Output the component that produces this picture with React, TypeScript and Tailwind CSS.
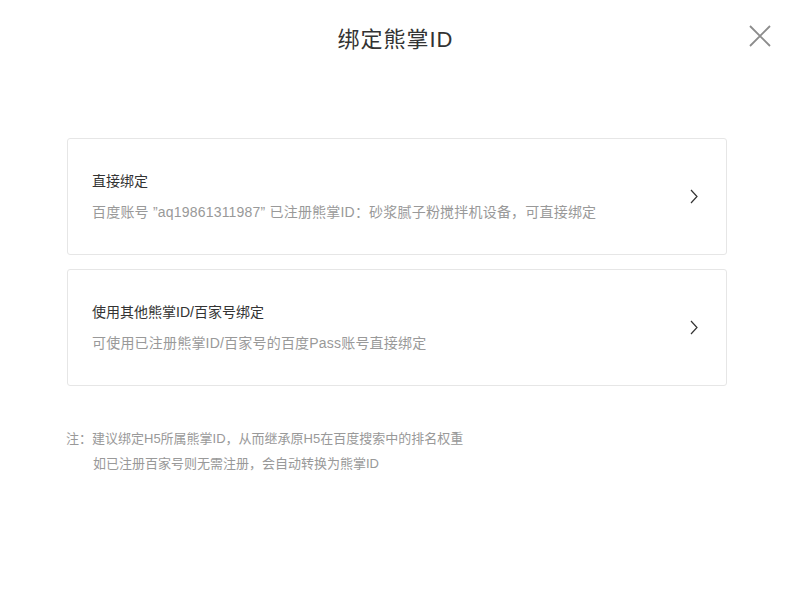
const options = [
  {
    title: '直接绑定',
    desc: '百度账号 ”aq19861311987” 已注册熊掌ID：砂浆腻子粉搅拌机设备，可直接绑定',
  },
  {
    title: '使用其他熊掌ID/百家号绑定',
    desc: '可使用已注册熊掌ID/百家号的百度Pass账号直接绑定',
  },
];

export default function App() {
  return (
    <div
      className="relative min-h-[596px] w-[791px] bg-white"
      style={{ fontFamily: '"Liberation Sans", "Noto Sans CJK SC", sans-serif' }}
    >
      <button className="absolute right-[19px] top-[24px] text-[#8c8c8c]" aria-label="close">
        <svg width="24" height="24" viewBox="0 0 24 24" fill="none" stroke="currentColor" strokeWidth="1.8">
          <path d="M2 2 L22 22 M22 2 L2 22" />
        </svg>
      </button>

      <h1 className="pt-[26px] text-center text-[22px] leading-[28px] font-normal tracking-[1px] text-[#333]">
        绑定熊掌ID
      </h1>

      <div className="ml-[67px] mt-[84px] flex w-[660px] flex-col gap-[14px]">
        {options.map((o) => (
          <div
            key={o.title}
            className="flex h-[117px] cursor-pointer items-center justify-between rounded-[3px] border border-[#e6e6e6] pl-[24px] pr-[28px]"
          >
            <div>
              <div className="text-[14px] leading-[20px] text-[#333]">{o.title}</div>
              <div className="mt-[11px] text-[14px] leading-[20px] tracking-[0.2px] text-[#999]">{o.desc}</div>
            </div>
            <svg width="8" height="15" viewBox="0 0 8 15" fill="none" stroke="#333" strokeWidth="1.2">
              <path d="M1 1 L7 7.5 L1 14" />
            </svg>
          </div>
        ))}
      </div>

      <div className="ml-[66px] mt-[40px] text-[13px] leading-[25px] text-[#999]">
        <div>注：建议绑定H5所属熊掌ID，从而继承原H5在百度搜索中的排名权重</div>
        <div className="pl-[27px]">如已注册百家号则无需注册，会自动转换为熊掌ID</div>
      </div>
    </div>
  );
}
